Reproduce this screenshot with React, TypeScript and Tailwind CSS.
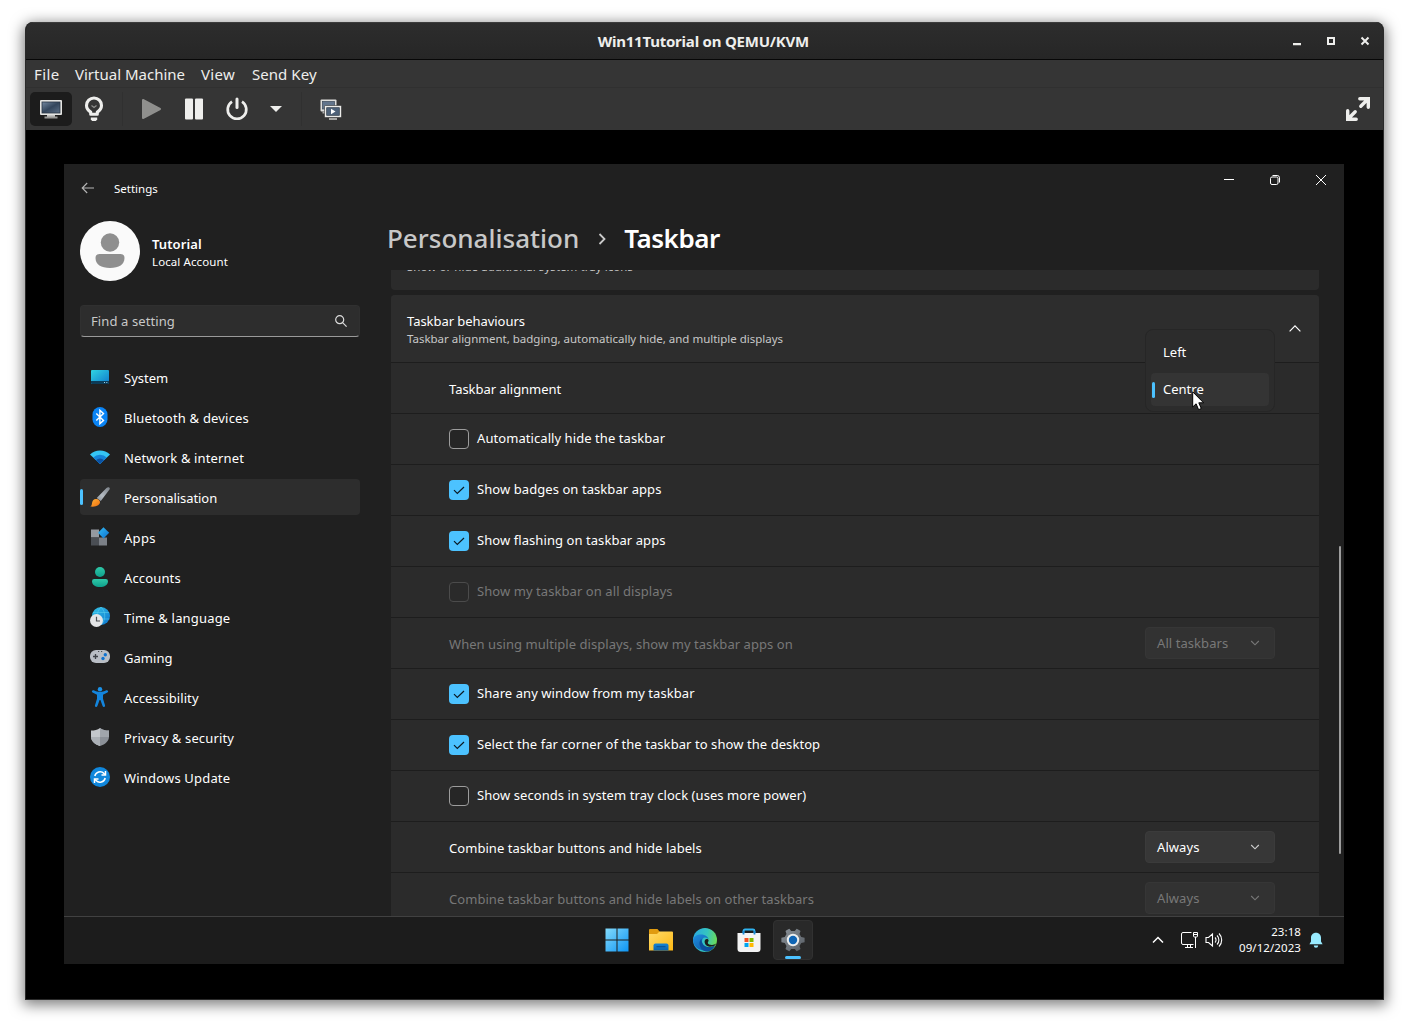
import type { ReactNode } from 'react';

/* ---------- Host toolbar icons ---------- */

function MonitorIcon() {
  return (
    <svg width="24" height="20" viewBox="0 0 24 20">
      <defs>
        <linearGradient id="mon" x1="0" y1="0" x2="1" y2="1">
          <stop offset="0" stopColor="#7488a0" />
          <stop offset="0.5" stopColor="#34465c" />
          <stop offset="1" stopColor="#5c6f86" />
        </linearGradient>
      </defs>
      <rect x="1" y="1" width="22" height="15" rx="1" fill="#e4e4e2" />
      <rect x="3" y="3" width="18" height="11" fill="url(#mon)" stroke="#2a3644" strokeWidth="0.800" />
      <path d="M8 16h8v2H8z" fill="#c5c5c3" />
      <path d="M5.500 17.500h13v2h-13z" fill="#9a9a98" />
    </svg>
  );
}

function BulbIcon() {
  return (
    <svg width="20" height="26" viewBox="0 0 20 26" fill="none">
      <path d="M6.700 18.300v-2.200C4 14.300 2.500 12.300 2.500 9.500a7.500 7.500 0 0 1 15 0c0 2.800-1.500 4.800-4.200 6.600v2.200z" stroke="#eeeeec" strokeWidth="3.100" strokeLinejoin="round" />
      <path d="M7.500 9.500 10 11.500l2.500-2" stroke="#8f8f8d" strokeWidth="1.200" />
      <path d="M6.800 21.500h6.400v2l-1.400 1.500H8.200l-1.400-1.500z" fill="#eeeeec" />
    </svg>
  );
}

function SnapshotIcon() {
  return (
    <svg width="22" height="22" viewBox="0 0 22 22">
      <rect x="0.500" y="0.500" width="16" height="12" rx="1" fill="#dededc" />
      <rect x="2.500" y="2.500" width="12" height="7.500" fill="#62758c" stroke="#3a4857" strokeWidth="0.700" />
      <path d="M2.500 14.500h5v-2h-5z" fill="#b0b0ae" />
      <rect x="4.500" y="6.500" width="17" height="12" rx="1" fill="#ececea" stroke="#333" strokeWidth="0.600" />
      <rect x="6.700" y="8.700" width="12.600" height="7.600" fill="#4e6279" stroke="#2c3947" strokeWidth="0.700" />
      <path d="M11 9.800v5.400l4.500-2.700z" fill="#fff" />
      <path d="M9 19h8v2H9z" fill="#a5a5a3" />
    </svg>
  );
}

/* ---------- Sidebar icons ---------- */

const SystemIcon = (
  <svg width="20" height="20" viewBox="0 0 20 20">
    <defs>
      <linearGradient id="sys" x1="0" y1="0" x2="1" y2="1">
        <stop offset="0" stopColor="#30d5e2" />
        <stop offset="1" stopColor="#0f79cb" />
      </linearGradient>
    </defs>
    <rect x="1" y="3" width="18" height="14" rx="1" fill="url(#sys)" />
    <path d="M1 14h18v2a1 1 0 0 1-1 1H2a1 1 0 0 1-1-1z" fill="#0c3b57" />
    <path d="M14 15h1v1h-1zM16.300 15h1v1h-1z" fill="#9fd4ee" />
  </svg>
);

const BluetoothIcon = (
  <svg width="20" height="20" viewBox="0 0 20 20">
    <rect x="2.500" y="0" width="15" height="20" rx="7.500" fill="#0a84f5" />
    <path d="m6.300 6.600 7.200 6.800-3.600 3.200V3.400l3.600 3.200-7.200 6.800" fill="none" stroke="#fff" strokeWidth="1.400" />
  </svg>
);

const NetworkIcon = (
  <svg width="20" height="20" viewBox="0 0 20 20">
    <path d="M0 7.500a14.500 14.500 0 0 1 20 0L10 17z" fill="#35c5f4" />
    <path d="M3.200 10.500a9.800 9.800 0 0 1 13.600 0L10 17z" fill="#1584d8" />
    <path d="M6 13.200a5.700 5.700 0 0 1 8 0L10 17z" fill="#0b52a3" />
  </svg>
);

const BrushIcon = (
  <svg width="20" height="20" viewBox="0 0 20 20">
    <defs>
      <linearGradient id="hdl" x1="1" y1="0" x2="0" y2="1">
        <stop offset="0" stopColor="#7b8188" />
        <stop offset="0.600" stopColor="#b3bac1" />
        <stop offset="1" stopColor="#8c939b" />
      </linearGradient>
      <linearGradient id="brs" x1="0" y1="0" x2="1" y2="1">
        <stop offset="0" stopColor="#ffb238" />
        <stop offset="1" stopColor="#f0700f" />
      </linearGradient>
    </defs>
    <path d="M18.800.2c1 .2 1.300 1.300.7 2.300L10.800 14 6.700 11 16.500.9c.7-.6 1.500-.9 2.300-.7z" fill="url(#hdl)" />
    <path d="M5.800 12c2-.5 4.200 1 4.200 3.100 0 3-3.500 5.200-9.700 4.500 1.900-1 1.300-2.300 1.900-4.400.5-1.800 1.600-2.900 3.600-3.200z" fill="url(#brs)" />
  </svg>
);

const AppsIcon = (
  <svg width="20" height="20" viewBox="0 0 20 20">
    <defs>
      <linearGradient id="dia" x1="0" y1="0" x2="1" y2="1">
        <stop offset="0" stopColor="#35bdf5" />
        <stop offset="1" stopColor="#0a6fd0" />
      </linearGradient>
    </defs>
    <path d="M1 2.500h8v8H1z" fill="#9499a0" />
    <path d="M1 10.500h8v8H1z" fill="#4a4e54" />
    <path d="M9 10.500h8v8H9z" fill="#7b8087" />
    <path d="m13.500.2 5.700 5.500-5.700 5.700L8 5.700z" fill="url(#dia)" />
  </svg>
);

const AccountsIcon = (
  <svg width="20" height="20" viewBox="0 0 20 20">
    <defs>
      <linearGradient id="acc" x1="0" y1="0" x2="0" y2="1">
        <stop offset="0" stopColor="#2fc8a8" />
        <stop offset="1" stopColor="#0ea08c" />
      </linearGradient>
    </defs>
    <circle cx="10" cy="5" r="5" fill="url(#acc)" />
    <path d="M4.200 12h11.600A2.200 2.200 0 0 1 18 14.200C18 18 14.500 20 10 20s-8-2-8-5.800A2.200 2.200 0 0 1 4.200 12z" fill="url(#acc)" />
  </svg>
);

const TimeIcon = (
  <svg width="20" height="20" viewBox="0 0 20 20">
    <defs>
      <linearGradient id="glb" x1="0" y1="0" x2="1" y2="1">
        <stop offset="0" stopColor="#35c6e8" />
        <stop offset="1" stopColor="#0b72cd" />
      </linearGradient>
    </defs>
    <circle cx="11" cy="9" r="9" fill="url(#glb)" />
    <path d="M3 5.500h16M3 12h16.500M11 0c-5 5-5 13 0 18M11 0c5 5 5 13 0 18" stroke="#5fd4f0" strokeWidth="0.700" fill="none" opacity="0.700" />
    <circle cx="6.500" cy="13.500" r="6.500" fill="#e4e5e7" />
    <path d="M6.500 9.800v4.200H10" stroke="#4b4e52" strokeWidth="1.200" fill="none" />
  </svg>
);

const GamingIcon = (
  <svg width="20" height="20" viewBox="0 0 20 20">
    <rect x="0" y="3" width="20" height="13" rx="6" fill="#b9bec5" />
    <path d="M5.500 7v5M3 9.500h5" stroke="#3f4349" strokeWidth="1.300" />
    <circle cx="15.300" cy="7.700" r="1.700" fill="#0f72cf" />
    <circle cx="13" cy="11.500" r="1.700" fill="#0f72cf" />
    <path d="M8 4h1.200v1H8zM11 4h1.200v1H11z" fill="#4b4e52" />
  </svg>
);

const AccessibilityIcon = (
  <svg width="20" height="20" viewBox="0 0 20 20">
    <circle cx="10" cy="2.200" r="2.200" fill="#1a93ea" />
    <path d="M2 4c.3-.8 1-1 1.700-.7C5.800 4.300 7.800 5 10 5s4.200-.7 6.300-1.700c.7-.3 1.400-.1 1.700.7.300.7 0 1.200-.6 1.500L13 7.700v4l2 6.600c.2.800-.1 1.300-.8 1.600-.7.200-1.300-.1-1.600-.8L10.400 13h-.8l-2.200 6.100c-.3.700-.9 1-1.600.8-.7-.3-1-.8-.8-1.600l2-6.600v-4L2.600 5.500C2 5.200 1.700 4.700 2 4z" fill="#1485dd" />
  </svg>
);

const ShieldIcon = (
  <svg width="20" height="20" viewBox="0 0 20 20">
    <path d="M10 1c2.500 1.800 5.500 2.500 9 2.600v5.900c0 4.500-3.500 7.700-9 9.500z" fill="#8b9097" />
    <path d="M10 1C7.500 2.800 4.500 3.500 1 3.600v5.900C1 14 4.500 17.200 10 19z" fill="#c3c7cc" />
    <path d="M1 10h9v9C4.800 17.300 1.300 14.300 1 10z" fill="#abb0b6" />
    <path d="M10 1c2.500 1.800 5.500 2.500 9 2.600V10h-9z" fill="#a0a5ab" />
  </svg>
);

const UpdateIcon = (
  <svg width="20" height="20" viewBox="0 0 20 20">
    <circle cx="10" cy="10" r="10" fill="#1087dc" />
    <path d="M4.800 9A5.400 5.400 0 0 1 14 6.500l1 1M15.200 11A5.400 5.400 0 0 1 6 13.500l-1-1" stroke="#fff" strokeWidth="1.500" fill="none" />
    <path d="M15.500 4v4h-4M4.500 16v-4h4" stroke="#fff" strokeWidth="1.500" fill="none" />
  </svg>
);

const nav: { label: string; icon: ReactNode; tracking: string; active?: boolean }[] = [
  { label: 'System', icon: SystemIcon, tracking: 'tracking-[0px]' },
  { label: 'Bluetooth & devices', icon: BluetoothIcon, tracking: 'tracking-[0.19px]' },
  { label: 'Network & internet', icon: NetworkIcon, tracking: 'tracking-[0.15px]' },
  { label: 'Personalisation', icon: BrushIcon, tracking: 'tracking-[-0.07px]', active: true },
  { label: 'Apps', icon: AppsIcon, tracking: 'tracking-[0.3px]' },
  { label: 'Accounts', icon: AccountsIcon, tracking: 'tracking-[0.15px]' },
  { label: 'Time & language', icon: TimeIcon, tracking: 'tracking-[0.18px]' },
  { label: 'Gaming', icon: GamingIcon, tracking: 'tracking-[0.05px]' },
  { label: 'Accessibility', icon: AccessibilityIcon, tracking: 'tracking-[0.1px]' },
  { label: 'Privacy & security', icon: ShieldIcon, tracking: 'tracking-[0.14px]' },
  { label: 'Windows Update', icon: UpdateIcon, tracking: 'tracking-[0.18px]' },
];

/* ---------- Settings rows ---------- */

function Chevron({ className = '' }: { className?: string }) {
  return (
    <svg width="10" height="6" viewBox="0 0 10 6" fill="none" stroke="currentColor" strokeWidth="1.100" className={className}>
      <path d="m1.200 1 3.800 3.800L8.800 1" />
    </svg>
  );
}

function Row({ children, disabled }: { children: ReactNode; disabled?: boolean }) {
  return (
    <div className={`flex h-[51px] shrink-0 items-center border-t border-[#1d1d1d] pr-[44px] pl-[58px] tracking-[0.07px] ${disabled ? 'text-[#787878]' : 'text-white'}`}>
      {children}
    </div>
  );
}

function CheckRow({ label, checked, disabled }: { label: string; checked?: boolean; disabled?: boolean }) {
  return (
    <Row disabled={disabled}>
      {checked ? (
        <span className="flex size-5 items-center justify-center rounded bg-[#4cc2ff]">
          <svg width="12" height="10" viewBox="0 0 12 10" fill="none" stroke="#0b1a24" strokeWidth="1.200">
            <path d="m1 5.200 3.300 3.300L11 2" />
          </svg>
        </span>
      ) : (
        <span className={`size-5 rounded border ${disabled ? 'border-[#4b4b4b] bg-[#2a2a2a]' : 'border-[#9c9c9c] bg-[#262626]'}`} />
      )}
      <span className="ml-2">{label}</span>
    </Row>
  );
}

function SelectRow({ label, value, disabled }: { label: string; value: string; disabled?: boolean }) {
  return (
    <Row disabled={disabled}>
      <span className="mt-[3px] tracking-[0.05px]">{label}</span>
      <div className={`ml-auto flex h-8 w-[130px] items-center justify-between rounded border pr-[14px] pl-[11px] ${disabled ? 'border-[#363636] bg-[#323232]' : 'border-[#3b3b3b] bg-[#373737]'}`}>
        <span className="mt-[2px]">{value}</span>
        <Chevron className={disabled ? 'text-[#787878]' : 'text-[#cfcfcf]'} />
      </div>
    </Row>
  );
}

/* ---------- Guest taskbar icons ---------- */

const StartIcon = (
  <svg width="24" height="24" viewBox="0 0 24 24">
    <defs>
      <linearGradient id="win" gradientUnits="userSpaceOnUse" x1="0" y1="0" x2="24" y2="24">
        <stop offset="0" stopColor="#86dcfc" />
        <stop offset="1" stopColor="#0b93f3" />
      </linearGradient>
    </defs>
    <path d="M.5.500h11v11H.500zM12.500.500h11v11h-11zM.5 12.500h11v11H.500zM12.500 12.500h11v11h-11z" fill="url(#win)" />
  </svg>
);

const FolderIcon = (
  <svg width="24" height="24" viewBox="0 0 24 24">
    <defs>
      <linearGradient id="fld" x1="0" y1="0" x2="1" y2="1">
        <stop offset="0" stopColor="#ffdb6a" />
        <stop offset="1" stopColor="#fdb813" />
      </linearGradient>
      <linearGradient id="fdb" x1="0" y1="0" x2="0" y2="1">
        <stop offset="0" stopColor="#1784d6" />
        <stop offset="1" stopColor="#0c63ad" />
      </linearGradient>
    </defs>
    <path d="M0 2a1 1 0 0 1 1-1h7.500l2 2.500V9H0z" fill="#e09b10" />
    <path d="M0 6h8l2.500-2.500H23a1 1 0 0 1 1 1V22.500H0z" fill="url(#fld)" />
    <path d="M4.500 22.500v-5a2 2 0 0 1 2-2h11a2 2 0 0 1 2 2v5z" fill="url(#fdb)" />
    <path d="M7.500 18.700h9" stroke="#0b4f92" strokeWidth="1" />
  </svg>
);

const EdgeIcon = (
  <svg width="24" height="24" viewBox="0 0 24 24">
    <defs>
      <linearGradient id="eg1" x1="0" y1="0.300" x2="1" y2="0.500">
        <stop offset="0" stopColor="#2aa9e0" />
        <stop offset="0.550" stopColor="#35c5c0" />
        <stop offset="1" stopColor="#6bdc55" />
      </linearGradient>
      <linearGradient id="eg2" x1="0" y1="0" x2="1" y2="1">
        <stop offset="0" stopColor="#1e8fe0" />
        <stop offset="1" stopColor="#0d4f9e" />
      </linearGradient>
    </defs>
    <circle cx="12" cy="12" r="12" fill="url(#eg1)" />
    <path d="M0 12C.5 8.500 4 6.500 8 6.500c4.500 0 7.500 2.500 7.800 5.500-.5-1.300-2-2.500-3.800-2.500-2 0-3 2-3 4 0 3.500 3.500 5.500 7 5.500 2.700 0 4.500-1 6-1.800A12 12 0 0 1 0 12z" fill="url(#eg2)" />
    <path d="M8.500 11c-1.300 1-2 2.500-2 4.500 0 4.500 4 8.300 8.300 8.100A12 12 0 0 0 22 17.700c-2 1-3.700 1.500-6 1.500-4 0-7.500-2.700-7.500-8.200z" fill="#0c4e9b" />
    <path d="M11.600 13.600c0-1.500.9-2.700 2.200-2.700 1 0 1.800.7 1.800 1.700 0 .9-.8 1.400-.8 2.300 0 1.200 2 2 4.200 2 1.700 0 3.200-.7 4-1.300l-.8 1.700c-1.500.8-3.400 1.400-5.200 1.400-3.100 0-5.400-2.200-5.400-5.100z" fill="#1c1c1c" />
  </svg>
);

const StoreIcon = (
  <svg width="24" height="24" viewBox="0 0 24 24">
    <path d="M6.500 6.500V3A1.500 1.500 0 0 1 8 1.500h8A1.500 1.500 0 0 1 17.500 3v3.500" fill="none" stroke="#2fb3f0" strokeWidth="1.800" />
    <path d="M.5 5h23v16a3 3 0 0 1-3 3h-17a3 3 0 0 1-3-3z" fill="#f3f3f3" />
    <path d="M6.500 3v3.500M17.500 3v3.500" stroke="#1989d4" strokeWidth="1.800" />
    <path d="M7.500 10h4v4h-4z" fill="#f25022" />
    <path d="M12.500 10h4v4h-4z" fill="#7fba00" />
    <path d="M7.500 15h4v4h-4z" fill="#00a4ef" />
    <path d="M12.500 15h4v4h-4z" fill="#ffb900" />
  </svg>
);

const GearIcon = (
  <svg width="24" height="24" viewBox="0 0 24 24">
    <defs>
      <linearGradient id="gr" x1="0" y1="0" x2="1" y2="1">
        <stop offset="0" stopColor="#8b9299" />
        <stop offset="1" stopColor="#565c63" />
      </linearGradient>
    </defs>
    <path d="M5.500 2.200 8.300.700 10.200 3h3.600L15.700.700l2.800 1.500 1 .8-1 3 1.700 3 3.400.7v4.600l-3.400.7-1.700 3 1 3-1 .8-2.800 1.500-1.900-2.300h-3.600l-1.900 2.300-2.800-1.500-1-.8 1-3-1.700-3-3.400-.7V9.700l3.400-.7 1.700-3-1-3z" fill="url(#gr)" />
    <circle cx="12" cy="12" r="6.200" fill="#eceeef" />
    <circle cx="12" cy="12" r="4.200" fill="#0f65b5" />
  </svg>
);

export default function App() {
  return (
    <div className="h-[1028px] w-[1409px] overflow-hidden bg-white px-[25px] pt-[22px] font-['Noto_Sans',sans-serif]">
      <div className="flex h-[978px] w-[1359px] flex-col overflow-hidden rounded-t-[8px] border border-t-0 border-[#2a2a2a] bg-black shadow-[0_3px_14px_2px_rgba(0,0,0,0.5)]">
        {/* Host window title bar */}
        <div className="flex h-[38px] shrink-0 items-center border-t border-b border-t-[#3c3c3c] border-b-[#070707] bg-linear-to-b from-[#2d2d2d] to-[#262626]">
          <div className="flex-1" />
          <div className="text-[15px] font-bold tracking-[-0.22px] text-[#eeeeec]">Win11Tutorial on QEMU/KVM</div>
          <div className="flex w-[574px] items-center justify-end gap-[24px] pr-[13px] text-[#eeeeec]">
            <svg width="10" height="10" viewBox="0 0 10 10"><path d="M1 7h8v2.200H1z" fill="currentColor" /></svg>
            <svg width="10" height="10" viewBox="0 0 10 10"><path d="M2 2h6v6H2z" fill="none" stroke="currentColor" strokeWidth="2" /></svg>
            <svg width="10" height="10" viewBox="0 0 10 10"><path d="m1.500 1.500 7 7m0-7-7 7" stroke="currentColor" strokeWidth="2" /></svg>
          </div>
        </div>

        {/* Menu bar */}
        <div className="flex h-[28px] shrink-0 items-center border-b border-[#303030] bg-[#353535] pt-[2px] pl-[8px] text-[15px] text-[#eeeeec]">
          <span className="w-[41px] tracking-[0.4px]">File</span>
          <span className="w-[126px]">Virtual Machine</span>
          <span className="w-[51px] tracking-[0.3px]">View</span>
          <span className="tracking-[0.05px]">Send Key</span>
        </div>

        {/* Toolbar */}
        <div className="flex h-[42px] shrink-0 items-center bg-[#353535] pr-[12px] pl-[4px]">
          <div className="flex h-[34px] w-[42px] items-center justify-center rounded-[5px] bg-[#1c1c1c]">
            <MonitorIcon />
          </div>
          <div className="flex w-[44px] justify-center"><BulbIcon /></div>
          <div className="ml-[6px] h-[34px] w-px bg-[#303030]" />
          <svg width="20" height="22" viewBox="0 0 20 22" className="ml-[18px]"><path d="M2 2v18l17-9z" fill="#8f8f8d" stroke="#8f8f8d" strokeWidth="2" strokeLinejoin="round" /></svg>
          <svg width="20" height="22" viewBox="0 0 20 22" className="ml-[23px]">
            <rect x="1" y="0.500" width="8" height="21" rx="1" fill="#eeeeec" />
            <rect x="11" y="0.500" width="8" height="21" rx="1" fill="#eeeeec" />
          </svg>
          <svg width="24" height="24" viewBox="0 0 24 24" className="ml-[21px]" fill="none" stroke="#eeeeec" strokeWidth="2.700">
            <path d="M7 4.600a9.300 9.300 0 1 0 10 0" />
            <path d="M12 2v8.500" strokeWidth="3" strokeLinecap="round" />
          </svg>
          <svg width="12" height="6" viewBox="0 0 12 6" className="ml-[21px]"><path d="M0 0h12L6 6z" fill="#eeeeec" /></svg>
          <div className="ml-[19px] h-[34px] w-px bg-[#303030]" />
          <div className="mt-px ml-[18px]"><SnapshotIcon /></div>
          <svg width="26" height="26" viewBox="0 0 26 26" className="ml-auto" fill="none" stroke="#eeeeec" strokeWidth="3.400">
            <path d="M14.800 2.700h8.500v8.500M23 3l-7.200 7.200M11.200 23.300H2.700v-8.500M3 23l7.200-7.200" strokeLinejoin="miter" strokeLinecap="round" />
          </svg>
        </div>

        {/* Guest display */}
        <div className="mt-[34px] ml-[38px] flex h-[800px] w-[1280px] flex-col bg-[#202020] text-[13px] text-white">
          <div className="flex h-[48px] shrink-0">
            <div className="flex flex-1 items-center pl-[17px]">
              <svg width="14" height="12" viewBox="0 0 14 12" fill="none" stroke="#b5b5b5" strokeWidth="1.100"><path d="M13 6H1.200M6.200 1l-5 5 5 5" /></svg>
              <span className="mt-px ml-[19px] text-[11.5px]">Settings</span>
            </div>
            <div className="flex h-[32px] text-white">
              <span className="flex w-[46px] items-center justify-center"><span className="mb-px h-px w-[10px] bg-white" /></span>
              <span className="flex w-[46px] items-center justify-center">
                <svg width="10" height="10" viewBox="0 0 10 10" fill="none" stroke="currentColor" strokeWidth="1"><rect x="0.500" y="2" width="7.500" height="7.500" rx="1.500" /><path d="M2.500.500h4.700A2.300 2.300 0 0 1 9.500 2.800v4.700" /></svg>
              </span>
              <span className="flex w-[46px] items-center justify-center">
                <svg width="10" height="10" viewBox="0 0 10 10" stroke="currentColor" strokeWidth="1"><path d="m0 0 10 10M10 0 0 10" /></svg>
              </span>
            </div>
          </div>

          <div className="flex h-[704px] shrink-0">
            {/* Sidebar */}
            <div className="w-[327px] shrink-0 pr-[31px] pl-[16px]">
              <div className="mt-[9px] flex h-[60px] items-center">
                <svg width="60" height="60" viewBox="0 0 60 60">
                  <circle cx="30" cy="30" r="30" fill="#fafafa" />
                  <circle cx="30" cy="21.500" r="9.200" fill="#8f8f8f" />
                  <path d="M19.500 33h21a4 4 0 0 1 4 4c0 6.500-5.500 10-14.500 10s-14.500-3.500-14.500-10a4 4 0 0 1 4-4z" fill="#8f8f8f" />
                </svg>
                <div className="mt-[3px] ml-[12px]">
                  <div className="text-[13px] leading-[18px] font-semibold tracking-[0.1px]">Tutorial</div>
                  <div className="text-[11.5px] leading-[18px] tracking-[0.1px]">Local Account</div>
                </div>
              </div>
              <div className="mt-[24px] flex h-[32px] w-[280px] items-center justify-between rounded border border-b-[1px] border-[#303030] border-b-[#9a9a9a] bg-[#2d2d2d] pr-[12px] pl-[10px] text-[#c8c8c8]">
                <span className="mt-[2px] tracking-[0.1px]">Find a setting</span>
                <svg width="12" height="12" viewBox="0 0 12 12" fill="none" stroke="#dcdcdc" strokeWidth="1.200"><circle cx="4.700" cy="4.700" r="4" /><path d="m7.600 7.600 4 4" /></svg>
              </div>
              <div className="mt-[22px] flex w-[280px] flex-col gap-1">
                {nav.map((n) => (
                  <div key={n.label} className={`flex h-9 items-center rounded ${n.active ? 'bg-[#2d2d2d]' : ''}`}>
                    <span className={`h-4 w-[3px] rounded-full ${n.active ? 'bg-[#4cc2ff]' : ''}`} />
                    <span className="ml-[7px]">{n.icon}</span>
                    <span className={`mt-[3px] ml-[14px] ${n.tracking}`}>{n.label}</span>
                  </div>
                ))}
              </div>
            </div>

            {/* Page */}
            <div className="flex w-[928px] shrink-0 flex-col">
              <div className="-ml-1 flex h-[58px] shrink-0 items-center pb-[5px] text-[26px] font-medium">
                <span className="text-[#c8c8c8]">Personalisation</span>
                <svg width="9" height="12" viewBox="0 0 9 12" fill="none" stroke="#c8c8c8" strokeWidth="1.800" className="mr-[17px] ml-[19px]"><path d="m1.500 1 5 5-5 5" /></svg>
                <span className="font-semibold tracking-[-0.45px]">Taskbar</span>
              </div>
              <div className="flex h-[646px] flex-col overflow-hidden">
                <div className="flex h-[20px] shrink-0 flex-col justify-end rounded-b bg-[#2b2b2b] px-[16px] pb-[15px]">
                  <span className="text-[11.5px] leading-[16px] tracking-[0.05px] text-[#c8c8c8]">Show or hide additional system tray icons</span>
                </div>
                <div className="relative mt-[5px] flex shrink-0 flex-col rounded-t bg-[#2b2b2b]">
                  <div className="flex h-[67px] shrink-0 items-center justify-between rounded-t bg-[#2d2d2d] pr-[18px] pl-[16px]">
                    <div className="mt-[2px]">
                      <div className="leading-[18px] tracking-[-0.05px]">Taskbar behaviours</div>
                      <div className="text-[11.5px] leading-[17px] tracking-[-0.01px] text-[#c8c8c8]">Taskbar alignment, badging, automatically hide, and multiple displays</div>
                    </div>
                    <svg width="12" height="7" viewBox="0 0 12 7" fill="none" stroke="#fff" strokeWidth="1.200"><path d="m.6 6.300 5.400-5.400 5.400 5.400" /></svg>
                  </div>
                  <Row><span className="mt-[3px] tracking-[-0.05px]">Taskbar alignment</span></Row>
                  <CheckRow label="Automatically hide the taskbar" />
                  <CheckRow label="Show badges on taskbar apps" checked />
                  <CheckRow label="Show flashing on taskbar apps" checked />
                  <CheckRow label="Show my taskbar on all displays" disabled />
                  <SelectRow label="When using multiple displays, show my taskbar apps on" value="All taskbars" disabled />
                  <CheckRow label="Share any window from my taskbar" checked />
                  <CheckRow label="Select the far corner of the taskbar to show the desktop" checked />
                  <CheckRow label="Show seconds in system tray clock (uses more power)" />
                  <SelectRow label="Combine taskbar buttons and hide labels" value="Always" />
                  <SelectRow label="Combine taskbar buttons and hide labels on other taskbars" value="Always" disabled />

                  {/* Open alignment menu */}
                  <div className="absolute top-[34px] right-[44px] flex h-[83px] w-[130px] flex-col rounded-lg border border-[#262626] bg-[#2c2c2c] px-[5px] pt-[5px]">
                    <div className="flex h-[34px] items-center pt-[2px] pl-[12px]">Left</div>
                    <div className="mt-[4px] flex h-[33px] items-center rounded bg-[#343434] pl-px">
                      <span className="h-4 w-[3px] rounded-full bg-[#4cc2ff]" />
                      <span className="ml-[8px]">Centre</span>
                    </div>
                    <svg width="14" height="20" viewBox="0 0 14 20" className="absolute top-[61px] left-[46px]">
                      <path d="M.7.800v15.200l3.400-3.200 2.500 5.900 2.700-1.200-2.500-5.700h4.800z" fill="#fff" stroke="#000" strokeWidth="1" />
                    </svg>
                  </div>
                </div>
              </div>
            </div>

            {/* Scrollbar */}
            <div className="mt-[334px] ml-[20px] h-[308px] w-[2px] rounded-full bg-[#9d9d9d]" />
          </div>

          {/* Guest taskbar */}
          <div className="flex h-[48px] shrink-0 items-center border-t border-[#414141] bg-[#1c1c1c] pb-[2px]">
            <div className="ml-[533px] flex items-center gap-[4px]">
              <div className="flex size-10 items-center justify-center">{StartIcon}</div>
              <div className="flex size-10 items-center justify-center">{FolderIcon}</div>
              <div className="flex size-10 items-center justify-center">{EdgeIcon}</div>
              <div className="flex size-10 items-center justify-center">{StoreIcon}</div>
              <div className="relative flex size-10 items-center justify-center rounded border border-[#313131] bg-[#292929]">
                {GearIcon}
                <span className="absolute bottom-0 h-[3px] w-4 rounded-full bg-[#4cc2ff]" />
              </div>
            </div>
            <div className="ml-auto flex items-center pr-[21px]">
              <svg width="12" height="8" viewBox="0 0 12 8" fill="none" stroke="#fff" strokeWidth="1.500"><path d="m1 6.500 5-5 5 5" /></svg>
              <svg width="18" height="18" viewBox="0 0 18 18" fill="none" stroke="#fff" strokeWidth="1" className="ml-[17px]">
                <path d="M10.500 1.500H2A1.500 1.500 0 0 0 .5 3v9A1.500 1.500 0 0 0 2 13.500h10.500M4 16.500h8M6.500 13.500v3M9.500 13.500v3M12.500 1.500h4v3.500a1 1 0 0 1-1 1h-2a1 1 0 0 1-1-1zM14.500 6v11M12.500 3.500h4" />
              </svg>
              <svg width="18" height="16" viewBox="0 0 18 16" fill="none" stroke="#fff" strokeWidth="1.100" className="ml-[6px]">
                <path d="M1 5.500h2.500L7.500 2v12l-4-3.500H1zM10 5.500a3.500 3.500 0 0 1 0 5M12 3.500a6.300 6.300 0 0 1 0 9M14 1.500a9.200 9.200 0 0 1 0 13" />
              </svg>
              <div className="ml-[16px] text-right text-[11.5px] leading-[16px] tracking-[0.08px]">
                <div>23:18</div>
                <div>09/12/2023</div>
              </div>
              <svg width="14" height="16" viewBox="0 0 14 16" fill="#99ebff" className="ml-[8px]">
                <path d="M7 .8c3 0 5 2.200 5 5v3.700l1.600 2.700H.4L2 9.500V5.800c0-2.800 2-5 5-5zM4.800 13.500h4.400a2.200 2.200 0 0 1-4.400 0z" />
              </svg>
            </div>
          </div>
        </div>
      </div>
    </div>
  );
}
